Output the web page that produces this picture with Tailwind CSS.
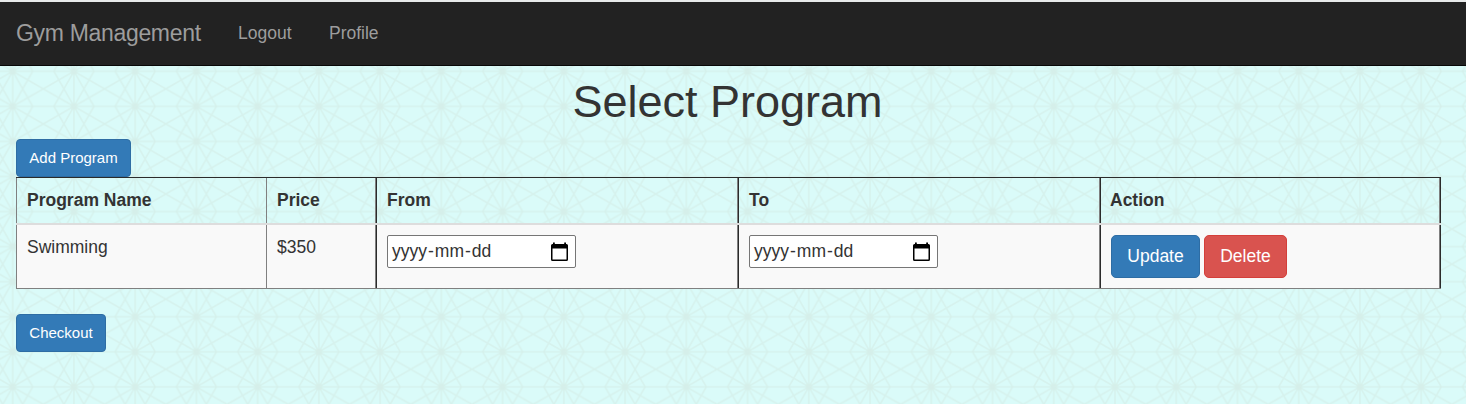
<!DOCTYPE html>
<html lang="en">
<head>
<meta charset="utf-8">
<title>Gym Management</title>
<script src="https://cdn.jsdelivr.net/npm/@tailwindcss/browser@4"></script>
</head>
<body class="relative h-[404px] overflow-hidden bg-[#dafbf9] font-['Liberation_Sans',Arial,sans-serif] text-[17.5px] leading-[25px] text-[#333]">
<svg class="absolute inset-0 -z-10 h-full w-full" aria-hidden="true">
  <defs>
    <pattern id="stars" x="12.7" y="1.2" width="61.24" height="35.06" patternUnits="userSpaceOnUse">
      <g fill="none" stroke="#d5eee9" stroke-opacity=".7" stroke-width="1.6">
        <path d="M0 0L61.24 35.06M61.24 0L0 35.06M0 0L20 35.06M20 0L0 35.06M61.24 0L41.24 35.06M41.24 0L61.24 35.06"/>
        <path stroke-width="1.6" d="M0 0H61.24M0 35.06H61.24M0 0V35.06M61.24 0V35.06" stroke-opacity=".7"/>
      </g>
      <g fill="#d5eee9" fill-opacity=".6"><circle r="3.5"/><circle cx="61.24" r="3.5"/><circle cy="35.06" r="3.5"/><circle cx="61.24" cy="35.06" r="3.5"/></g>
    </pattern>
  </defs>
  <rect width="1466" height="404" fill="url(#stars)"/>
</svg>
<nav class="flex h-[66px] items-center border-t-2 border-b border-t-[#e8eaea] border-b-[#080808] bg-[#222] pl-4 text-[#9d9d9d]">
  <a class="-mt-px w-[222px] text-[23px] tracking-[-0.32px]">Gym Management</a>
  <a class="w-[91px]">Logout</a>
  <a>Profile</a>
</nav>
<main class="px-4">
  <h1 class="mt-[11px] h-[62px] w-[1423px] text-center text-[45px] leading-[50px]">Select Program</h1>
  <button class="block h-[38px] w-[115px] rounded-[4px] border border-[#2e6da4] bg-[#337ab7] text-[15px] leading-[22px] text-white">Add Program</button>
  <div class="w-[1425px] border-t border-t-[#2b2b2b]">
    <div class="grid h-[45px] grid-cols-[250px_109px_362px_362px_340px_2px] font-bold">
      <div class="border-l border-[#808080] pt-[10px] pl-[10px]">Program Name</div>
      <div class="border-l border-[#808080] pt-[10px] pl-[10px]">Price</div>
      <div class="border-l border-[#808080] pt-[10px] pl-[11px] shadow-[inset_1px_0_#2b2b2b]">From</div>
      <div class="border-l border-[#808080] pt-[10px] pl-[11px] shadow-[inset_1px_0_#2b2b2b]">To</div>
      <div class="border-l border-[#808080] pt-[10px] pl-[10px] shadow-[inset_1px_0_#2b2b2b]">Action</div>
      <div class="border-l border-[#808080] bg-[#2b2b2b]"></div>
    </div>
    <div class="h-[2px] bg-[#ddd]"></div>
    <div class="grid h-[64px] grid-cols-[250px_109px_362px_362px_340px_2px] border-b border-[#808080] bg-[#f9f9f9]">
      <div class="border-l border-[#808080] pt-[10px] pl-[10px]">Swimming</div>
      <div class="border-l border-[#808080] pt-[10px] pl-[10px]">$350</div>
      <div class="border-l border-[#808080] pt-[10px] pl-[11px] shadow-[inset_1px_0_#2b2b2b]">
        <div class="flex h-[33px] w-[189px] items-center justify-between rounded-[2px] border border-[#767676] bg-white pr-[6px] pl-1">
          <span>yyyy<span class="px-px">-</span>mm<span class="px-px">-</span>dd</span>
          <svg class="h-5 w-[19px]" viewBox="0 0 19 20"><path fill="#000" fill-rule="evenodd" d="M3 0.5h1.8V2h9.4V.5H16V2h.5Q18 2 18 3.5V17.5Q18 19 16.5 19H2.5Q1 19 1 17.5V3.5Q1 2 2.5 2H3ZM2.5 6.5V17.5H16.5V6.5Z"/></svg>
        </div>
      </div>
      <div class="border-l border-[#808080] pt-[10px] pl-[11px] shadow-[inset_1px_0_#2b2b2b]">
        <div class="flex h-[33px] w-[189px] items-center justify-between rounded-[2px] border border-[#767676] bg-white pr-[6px] pl-1">
          <span>yyyy<span class="px-px">-</span>mm<span class="px-px">-</span>dd</span>
          <svg class="h-5 w-[19px]" viewBox="0 0 19 20"><path fill="#000" fill-rule="evenodd" d="M3 0.5h1.8V2h9.4V.5H16V2h.5Q18 2 18 3.5V17.5Q18 19 16.5 19H2.5Q1 19 1 17.5V3.5Q1 2 2.5 2H3ZM2.5 6.5V17.5H16.5V6.5Z"/></svg>
        </div>
      </div>
      <div class="flex gap-1 border-l border-[#808080] pt-[10px] pl-[11px] shadow-[inset_1px_0_#2b2b2b]">
        <button class="h-[43px] w-[89px] rounded-[5px] border border-[#2e6da4] bg-[#337ab7] text-white">Update</button>
        <button class="h-[43px] w-[83px] rounded-[5px] border border-[#d43f3a] bg-[#d9534f] text-white">Delete</button>
      </div>
      <div class="border-l border-[#808080] bg-[#2b2b2b]"></div>
    </div>
  </div>
  <button class="mt-[25px] block h-[38px] w-[90px] rounded-[4px] border border-[#2e6da4] bg-[#337ab7] text-[15px] leading-[22px] text-white">Checkout</button>
</main>
</body>
</html>
